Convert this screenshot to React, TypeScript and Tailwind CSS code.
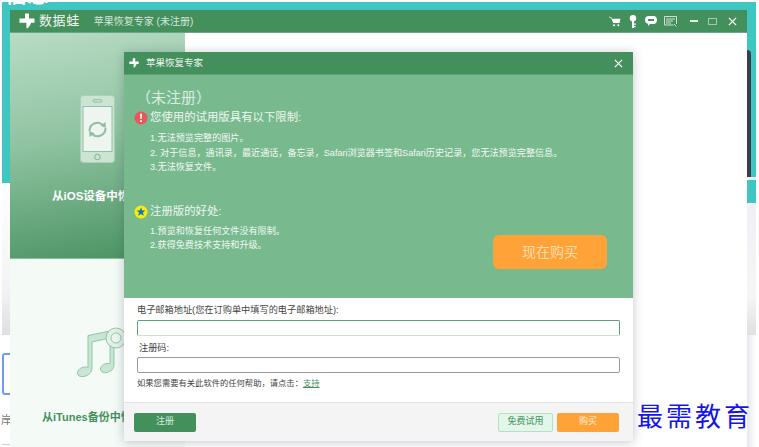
import React from "react";

const font = "font-['Liberation_Sans','Noto_Sans_CJK_SC',sans-serif]";

function Cross({ className }: { className: string }) {
  return (
    <svg viewBox="0 0 16 16" className={className}>
      <path d="M6 0.5h4v5h5.5v4.2H12c-.4 2-1.6 3.6-3 5.3-.6.6-1.6.5-1.6-.5V9.7H0.5V5.5H6z" fill="#fff" />
      <circle cx="11.5" cy="4" r="0.9" fill="#44905d" />
    </svg>
  );
}

function X({ className }: { className: string }) {
  return (
    <svg viewBox="0 0 10 10" className={className} fill="none" stroke="#fff" strokeWidth="1.4">
      <path d="M1 1l8 8M9 1l-8 8" />
    </svg>
  );
}

function HeaderIcons() {
  return (
    <div className="flex items-center">
      <svg viewBox="0 0 12 11" className="w-[12px] h-[11px]" fill="#fff">
        <path d="M0 0.5l2.5 1 .6 1.2h8.4l-1 4.3H4.3L2 2 0 1.2z" />
        <circle cx="5" cy="9.3" r="1" />
        <circle cx="9.3" cy="9.3" r="1" />
      </svg>
      <svg viewBox="0 0 8 13" className="w-[8px] h-[13px] ml-[8px]" fill="#fff">
        <circle cx="4" cy="3.2" r="3.2" />
        <path d="M3 5h2v8H3zM5 8.5h2v1.3H5zM5 11h1.5v1.3H5z" />
      </svg>
      <svg viewBox="0 0 12 10" className="w-[12px] h-[10px] ml-[8px]" fill="#fff">
        <path d="M3.5 0h5C10.5 0 12 1.2 12 4s-1.5 4-3.5 4H5L3 10V7.8C1 7.4 0 6 0 4c0-2.8 1.5-4 3.5-4z" />
        <rect x="3" y="3" width="6" height="2" fill="#44905d" />
      </svg>
      <svg viewBox="0 0 13 11" className="w-[13px] h-[11px] ml-[7px]" fill="none" stroke="#dcebe1" strokeWidth="0.9">
        <path d="M12.5 8V0.5H.5v8.5h9" />
        <path d="M2 3h9M2 5h7M2 7h5" />
        <path d="M10 8l2.5 2.5" />
      </svg>
      <div className="w-[8px] h-[2px] bg-[#e6f0e9] ml-[13px]" />
      <div className="w-[9px] h-[7px] border border-[#a3c9b0] ml-[10px]" />
      <X className="w-[9px] h-[9px] ml-[11px]" />
    </div>
  );
}

function Phone() {
  return (
    <svg viewBox="0 0 35 68" className="w-[35px] h-[68px]">
      <rect x="0.5" y="0.5" width="34" height="67" rx="3" fill="#cbe4d4" stroke="#a9d2b8" />
      <rect x="3" y="11.5" width="29" height="45" fill="#eef4ef" stroke="#8fc2a1" />
      <rect x="13" y="4.7" width="9" height="2.4" rx="1.2" fill="none" stroke="#7fb693" strokeWidth="0.8" />
      <circle cx="17.5" cy="62" r="2.8" fill="none" stroke="#7fb693" />
      <g fill="none" stroke="#8cc2a0" strokeWidth="2">
        <path d="M9.5 36a8 8 0 0 1 13.5-6" />
        <path d="M25.5 33a8 8 0 0 1-13.5 6" />
      </g>
      <path d="M25.5 27l.4 6-5.4-2.2zM9.5 42l-.4-6 5.4 2.2z" fill="#8cc2a0" />
    </svg>
  );
}

function Music() {
  return (
    <svg viewBox="0 0 54 56" className="w-[54px] h-[56px]">
      <g fill="#c9e5d3" stroke="#80bb95" strokeWidth="0.8">
        <path d="M11 8.5l22-4.5v7l-18 4v26c0 4-3 7.500-8 8.500-4 .8-6.500-1-6.500-3.500 0-3 3-5.500 7-6 1.500-.2 2.500 0 3.500.5z" />
        <path d="M33 4h4v34c0 4-3 6.500-7 7.500-4 .8-6.500-1-6.500-3.500 0-3 3-5 6.500-5.500 1-.2 2 0 3 .3z" />
        <circle cx="39" cy="11" r="10" fill="#e2f1e7" />
        <circle cx="39" cy="11" r="5" fill="#eef7f1" />
      </g>
    </svg>
  );
}

export default function App() {
  return (
    <div className={`relative w-[759px] h-[447px] overflow-hidden bg-white ${font}`}>
      {/* page behind the application window */}
      <div className="absolute left-[2px] top-[2px] w-[754px] h-[445px] flex flex-col">
        <div className="h-[181px] bg-[#40c6c0] shrink-0 overflow-hidden">
          <div className="text-white text-[22px] leading-[22px] -mt-[18px] ml-[3px] font-bold">信息</div>
        </div>
        <div className="h-[152px] shrink-0 bg-[linear-gradient(180deg,#ffffff,#f3f3f5_70%,#dfdfe1)]" />
        <div className="flex-1 pt-[18px] relative">
          <div className="w-[12px] h-[42px] rounded-l-[3px] border-2 border-[#6f9bef] bg-white" />
          <div className="text-[11px] text-[#777] mt-[17px] ml-[-1px]">岸</div>
          <div className="absolute left-0 bottom-[2px] w-[8px] h-px bg-[#cfcfcf]" />
        </div>
      </div>
      <div className="absolute left-[747px] top-[2px] w-[9px] h-[201px] bg-[#40c6c0]" />
      <div className="absolute left-[747px] top-[177px] w-[9px] h-[3px] bg-[#eef7f6]" />
      <div className="absolute left-[747px] top-[50px] w-[4px] h-[127px] bg-[#3a3f47] rounded-tr-[4px]" />
      <div className="absolute left-[747px] top-[203px] w-[9px] h-[132px] bg-[linear-gradient(180deg,#eef0f3,#f6f6f8_70%,#e0e0e2)]" />
      <div className="absolute left-[747px] top-[335px] w-[9px] h-[112px] bg-[linear-gradient(90deg,#e6e9ee,#ffffff)]" />

      {/* application window */}
      <div className="absolute left-[10px] top-[10px] w-[737px] h-[437px] flex flex-col bg-white">
        <div className="h-[23px] shrink-0 bg-[#44905d] border-b border-[#69a882] flex items-center pl-[9px] pr-[10px]">
          <Cross className="w-[16px] h-[16px]" />
          <span className="ml-[4px] text-[13px] leading-[16px] text-[#f1f7f3] tracking-[0.6px]">数据蛙</span>
          <span className="ml-[14px] text-[10px] text-[#d4e6da]">苹果恢复专家 (未注册)</span>
          <div className="ml-auto">
            <HeaderIcons />
          </div>
        </div>
        <div className="flex flex-1 min-h-0">
          <div className="w-[175px] shrink-0 flex flex-col">
            <div className="h-[226px] shrink-0 bg-[linear-gradient(170deg,#b8dcc5,#8fc3a1_45%,#47915f)] border-b border-[#8dbf9f] flex flex-col items-center pt-[62px]">
              <Phone />
              <div className="mt-[25px] w-full pl-[42px] whitespace-nowrap text-[11.5px] leading-[16px] font-bold text-white">从iOS设备中恢复</div>
            </div>
            <div className="flex-1 bg-[#f4fbf7] flex flex-col pt-[68px] pl-[67px]">
              <Music />
              <div className="mt-[26px] -ml-[35px] whitespace-nowrap text-[11px] leading-[16px] font-bold text-[#44905d]">从iTunes备份中恢复</div>
            </div>
          </div>
          <div className="flex-1" />
        </div>
      </div>

      {/* registration dialog */}
      <div className="absolute left-[124px] top-[52px] w-[509px] h-[389px] flex flex-col bg-white shadow-[0_1px_10px_rgba(60,70,90,0.3)]">
        <div className="h-[23px] shrink-0 bg-[#44905d] border-b border-[#5c9f74] flex items-center pl-[5px] pr-[10px]">
          <Cross className="w-[10px] h-[10px]" />
          <span className="ml-[7px] text-[9.5px] text-[#eef5f0]">苹果恢复专家</span>
          <X className="w-[9px] h-[9px] ml-auto" />
        </div>

        <div className="h-[223px] shrink-0 bg-[#78ba8e] flex flex-col pl-[10px] pr-[26px] text-[#eef6f0]">
          <div className="mt-[15px] ml-[2px] text-[15px] leading-[16px] text-[#dcece1]">（未注册）</div>
          <div className="mt-[5px] flex items-center h-[14px]">
            <svg viewBox="0 0 14 14" className="w-[14px] h-[14px]">
              <circle cx="7" cy="7" r="6.5" fill="#e9565c" />
              <path d="M6 2.800h2l-.4 5.200H6.400zM6.100 9.200h1.800V11H6.100z" fill="#fff" />
            </svg>
            <span className="ml-[2px] text-[11.4px]">您使用的试用版具有以下限制:</span>
          </div>
          <ul className="mt-[6px] ml-[16px] text-[9.1px] leading-[14.5px] text-[#f2f8f4] whitespace-nowrap">
            <li>1.无法预览完整的图片。</li>
            <li>2. 对于信息，通讯录，最近通话，备忘录，Safari浏览器书签和Safari历史记录，您无法预览完整信息。</li>
            <li>3.无法恢复文件。</li>
          </ul>
          <div className="mt-[30px] flex-1 flex justify-between pb-[29px]">
            <div>
              <div className="flex items-center h-[14px]">
                <svg viewBox="0 0 14 14" className="w-[14px] h-[14px]">
                  <circle cx="7" cy="7" r="6.500" fill="#f7ee0a" />
                  <path d="M7 2.600l1.300 3h3.100l-2.400 2 .8 3.200L7 9.100l-2.800 1.700.8-3.200-2.400-2h3.100z" fill="#1673c4" />
                </svg>
                <span className="ml-[2px] text-[11.4px]">注册版的好处:</span>
              </div>
              <ul className="mt-[5px] ml-[16px] text-[9.1px] leading-[14px] text-[#f2f8f4] whitespace-nowrap">
                <li>1.预览和恢复任何文件没有限制。</li>
                <li>2.获得免费技术支持和升级。</li>
              </ul>
            </div>
            <button className="self-end w-[114px] h-[34px] rounded-[6px] bg-[#ffa339] text-[14px] text-[#ffdcae]">现在购买</button>
          </div>
        </div>

        <div className="flex-1 flex flex-col px-[13px] pt-[6px] text-[9.2px] leading-[12px] text-[#444]">
          <label>电子邮箱地址(您在订购单中填写的电子邮箱地址):</label>
          <input className="mt-[4px] w-[483px] h-[16px] shrink-0 rounded-[2px] border border-[#5ea277] border-b-[#c9e0d1] bg-white" />
          <label className="mt-[6px] ml-[2px]">注册码:</label>
          <input className="mt-[3px] w-[483px] h-[16px] shrink-0 rounded-[2px] border border-[#9a9a9a] bg-white" />
          <p className="mt-[4px] text-[8.3px]">
            如果您需要有关此软件的任何帮助，请点击：<a className="text-[#44905d] underline">支持</a>
          </p>
        </div>

        <div className="h-[39px] shrink-0 bg-[#f4f4f4] border-t border-[#e3e3e3] flex items-center pl-[10px] pr-[14px] text-[9px]">
          <button className="w-[62px] h-[19px] rounded-[2px] bg-[#44905d] text-[#d9ebdf]">注册</button>
          <button className="ml-auto w-[55px] h-[19px] rounded-[2px] bg-[#e2f6ea] border border-[#b1e3c2] text-[#44905d]">免费试用</button>
          <button className="ml-[4px] w-[62px] h-[19px] rounded-[2px] bg-[#ffa339] text-[#ffeeda]">购买</button>
        </div>
      </div>

      {/* watermark */}
      <div className="absolute left-[637px] top-[398px] text-[26px] leading-[34px] tracking-[3px] text-[#1414e6] whitespace-nowrap [text-shadow:0_0_2px_#fff,0_0_3px_#fff] font-['Noto_Sans_CJK_SC',sans-serif]">
        最需教育
      </div>
    </div>
  );
}
